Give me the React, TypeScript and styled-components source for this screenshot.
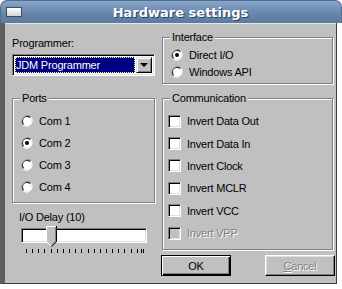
import styled, {createGlobalStyle} from 'styled-components';

const GlobalStyle = createGlobalStyle`
  html, body {
    margin: 0;
    padding: 0;
    background: #ffffff;
  }
  body {
    font-family: "Liberation Sans", Arial, sans-serif;
    font-size: 11px;
    letter-spacing: -0.2px;
    color: #000;
  }
`;

const ports = ['Com 1', 'Com 2', 'Com 3', 'Com 4'];
const flags = [
  {label: 'Invert Data Out'},
  {label: 'Invert Data In'},
  {label: 'Invert Clock'},
  {label: 'Invert MCLR'},
  {label: 'Invert VCC'},
  {label: 'Invert VPP', disabled: true},
];

const Radio = ({checked}: {checked?: boolean}) => (
  <RadioMark width="12" height="12" viewBox="0 0 12 12">
    <path d="M10.2 1.8 A6 6 0 0 0 1.8 10.2" fill="#808080" />
    <path d="M1.8 10.2 A6 6 0 0 0 10.2 1.8" fill="#ffffff" />
    <path d="M9.5 2.5 A5 5 0 0 0 2.5 9.5" fill="#000000" />
    <path d="M2.5 9.5 A5 5 0 0 0 9.5 2.5" fill="#dfdfdf" />
    <circle cx="6" cy="6" r="4" fill="#ffffff" />
    {checked && <circle cx="6" cy="6" r="2" fill="#000000" />}
  </RadioMark>
);

const Thumb = () => (
  <ThumbMark width="11" height="21" viewBox="0 0 11 21">
    <polygon points="0,0 11,0 11,15.5 5.5,21 0,15.5" fill="#c0c0c0" />
    <polyline points="0.5,15.5 0.5,0.5 10,0.5" stroke="#ffffff" fill="none" />
    <line x1="0.5" y1="15.5" x2="5" y2="20" stroke="#ffffff" />
    <polyline points="10.5,0 10.5,15.7 5.5,20.7" stroke="#000000" fill="none" />
    <polyline points="9.5,1 9.5,15.3 5.3,19.5" stroke="#808080" fill="none" />
  </ThumbMark>
);

const Ticks = () => {
  const xs = Array.from({length: 20}, (_, i) => Math.round(5 + i * 6.15) + 0.5);
  xs.push(120.5);
  return (
    <TickMarks width="126" height="4" viewBox="0 0 126 4">
      {xs.map((x) => (
        <line key={x} x1={x} y1="0" x2={x} y2="4" stroke="#000" />
      ))}
    </TickMarks>
  );
};

const App = () => {
  return (
    <>
      <GlobalStyle />
      <Window>
        <TitleBar>
          <WindowIcon />
          <Title>Hardware settings</Title>
        </TitleBar>
        <Body>
          <Column>
            <FieldLabel>Programmer:</FieldLabel>
            <Combo>
              <ComboValue>
                <span>JDM Programmer</span>
              </ComboValue>
              <ComboButton>
                <Arrow />
              </ComboButton>
            </Combo>
            <GroupBox $height={105} $top={22}>
              <Legend>Ports</Legend>
              <Rows $gap={5}>
                {ports.map((p) => (
                  <Option key={p} $height={22} $indent={8}>
                    <Radio checked={p === 'Com 2'} />
                    <span>{p}</span>
                  </Option>
                ))}
              </Rows>
            </GroupBox>
            <DelayLabel>I/O Delay (10)</DelayLabel>
            <Slider>
              <Track />
              <Thumb />
              <Ticks />
            </Slider>
          </Column>
          <Column>
            <GroupBox $height={47} $top={0}>
              <Legend>Interface</Legend>
              <Rows $gap={2}>
                <Option $height={17} $indent={8}>
                  <Radio checked />
                  <span>Direct I/O</span>
                </Option>
                <Option $height={17} $indent={8}>
                  <Radio />
                  <span>Windows API</span>
                </Option>
              </Rows>
            </GroupBox>
            <GroupBox $height={152} $top={14}>
              <Legend>Communication</Legend>
              <Rows $gap={5}>
                {flags.map((f) => (
                  <Option key={f.label} $height={22.4} $indent={5} $disabled={f.disabled}>
                    <CheckBox $disabled={f.disabled} />
                    <span>{f.label}</span>
                  </Option>
                ))}
              </Rows>
            </GroupBox>
            <ButtonRow>
              <Button $default>OK</Button>
              <Button disabled>
                <u>C</u>ancel
              </Button>
            </ButtonRow>
          </Column>
        </Body>
      </Window>
    </>
  );
};

const Window = styled.div`
  width: 342px;
  height: 289px;
  display: flex;
  flex-direction: column;
  background: #ffffff;
`;

const TitleBar = styled.div`
  height: 23px;
  flex: none;
  box-sizing: border-box;
  display: flex;
  align-items: center;
  padding: 0 2px 0 5px;
  border: 1px solid #4f6e92;
  border-bottom: none;
  border-radius: 7px 7px 0 0;
  background: linear-gradient(#88a5c6, #6585aa 60%, #5b7ba0);
`;

const WindowIcon = styled.div`
  width: 16px;
  height: 10px;
  box-sizing: border-box;
  border: 1px solid #3b4d63;
  background: linear-gradient(#ffffff, #cfd3d8);
`;

const Title = styled.div`
  flex: 1;
  text-align: center;
  font-family: "DejaVu Sans", sans-serif;
  font-weight: bold;
  font-size: 13px;
  letter-spacing: 0;
  color: #ffffff;
  text-shadow: 1px 1px 0 #2c4160;
`;

const Body = styled.div`
  flex: 1;
  box-sizing: border-box;
  display: grid;
  grid-template-columns: 143px 171px;
  column-gap: 7px;
  align-content: start;
  padding: 14px 3px 0 7px;
  background: #c0c0c0;
  border-left: 5px solid #5e5e5e;
  border-right: 1px solid #3c3c3c;
  border-bottom: 1px solid #3c3c3c;
  margin: 0 5px 5px 0;
  box-shadow: inset 0 1px 0 #e6e6e6;
`;

const Column = styled.div`
  display: flex;
  flex-direction: column;
`;

const FieldLabel = styled.div`
  height: 13px;
  line-height: 13px;
`;

const Combo = styled.div`
  margin-top: 4px;
  height: 22px;
  box-sizing: border-box;
  display: flex;
  padding: 1px;
  background: #ffffff;
  border: 1px solid;
  border-color: #808080 #ffffff #ffffff #808080;
  box-shadow: inset 1px 1px 0 #000000, inset -1px -1px 0 #dfdfdf;
`;

const ComboValue = styled.div`
  flex: 1;
  margin: 1px;
  display: flex;
  align-items: center;
  padding-left: 1px;
  background: #000080;
  color: #ffffff;
  outline: 1px dotted #ffff80;
  outline-offset: -1px;
  span {
    line-height: 13px;
  }
`;

const ComboButton = styled.div`
  width: 16px;
  margin: 1px 1px 1px 0;
  box-sizing: border-box;
  display: flex;
  align-items: center;
  justify-content: center;
  background: #c0c0c0;
  border: 1px solid;
  border-color: #dfdfdf #000000 #000000 #dfdfdf;
  box-shadow: inset 1px 1px 0 #ffffff, inset -1px -1px 0 #808080;
`;

const Arrow = styled.div`
  width: 0;
  height: 0;
  border-left: 4px solid transparent;
  border-right: 4px solid transparent;
  border-top: 4px solid #000000;
`;

const GroupBox = styled.div<{$height: number; $top: number}>`
  margin-top: ${(p) => p.$top}px;
  height: ${(p) => p.$height}px;
  box-sizing: border-box;
  display: flex;
  flex-direction: column;
  border: 1px solid #808080;
  box-shadow: 1px 1px 0 #ffffff, inset 1px 1px 0 #ffffff;
`;

const Legend = styled.span`
  align-self: flex-start;
  margin: -7px 0 0 7px;
  padding: 0 2px;
  height: 13px;
  line-height: 13px;
  background: #c0c0c0;
`;

const Rows = styled.div<{$gap: number}>`
  display: flex;
  flex-direction: column;
  padding-top: ${(p) => p.$gap}px;
`;

const Option = styled.div<{$height: number; $indent: number; $disabled?: boolean}>`
  height: ${(p) => p.$height}px;
  display: flex;
  align-items: center;
  gap: 6px;
  padding-left: ${(p) => p.$indent}px;
  color: ${(p) => (p.$disabled ? '#808080' : '#000000')};
  text-shadow: ${(p) => (p.$disabled ? '1px 1px 0 #ffffff' : 'none')};
`;

const RadioMark = styled.svg`
  flex: none;
  display: block;
`;

const CheckBox = styled.div<{$disabled?: boolean}>`
  flex: none;
  width: 13px;
  height: 13px;
  box-sizing: border-box;
  background: ${(p) => (p.$disabled ? '#c0c0c0' : '#ffffff')};
  border: 1px solid;
  border-color: #808080 #ffffff #ffffff #808080;
  box-shadow: inset 1px 1px 0 #000000, inset -1px -1px 0 #dfdfdf;
`;

const DelayLabel = styled.div`
  margin: 8px 0 0 7px;
  height: 13px;
  line-height: 13px;
`;

const Slider = styled.div`
  position: relative;
  margin: 4px 0 0 9px;
  width: 126px;
  display: flex;
  flex-direction: column;
`;

const Track = styled.div`
  height: 15px;
  box-sizing: border-box;
  background: #ffffff;
  border: 1px solid;
  border-color: #808080 #ffffff #ffffff #808080;
  box-shadow: inset 1px 1px 0 #000000, inset -1px -1px 0 #dfdfdf;
`;

const ThumbMark = styled.svg`
  position: absolute;
  left: 25px;
  top: -2px;
`;

const TickMarks = styled.svg`
  display: block;
  margin-top: 6px;
`;

const ButtonRow = styled.div`
  margin: 5px -2px 0 -1px;
  display: flex;
  justify-content: space-between;
`;

const Button = styled.button<{$default?: boolean}>`
  width: 70px;
  height: 21px;
  box-sizing: border-box;
  padding: 0;
  font-family: "Liberation Sans", Arial, sans-serif;
  font-size: 11px;
  letter-spacing: -0.2px;
  color: #000000;
  background: #c0c0c0;
  border: 1px solid;
  border-color: ${(p) => (p.$default ? '#000000' : '#ffffff #000000 #000000 #ffffff')};
  box-shadow: ${(p) =>
    p.$default
      ? 'inset 1px 1px 0 #ffffff, inset -1px -1px 0 #000000, inset -2px -2px 0 #808080'
      : 'inset -1px -1px 0 #808080, inset 1px 1px 0 #dfdfdf'};
  &:disabled {
    color: #808080;
    text-shadow: 1px 1px 0 #ffffff;
  }
`;

export default App;
